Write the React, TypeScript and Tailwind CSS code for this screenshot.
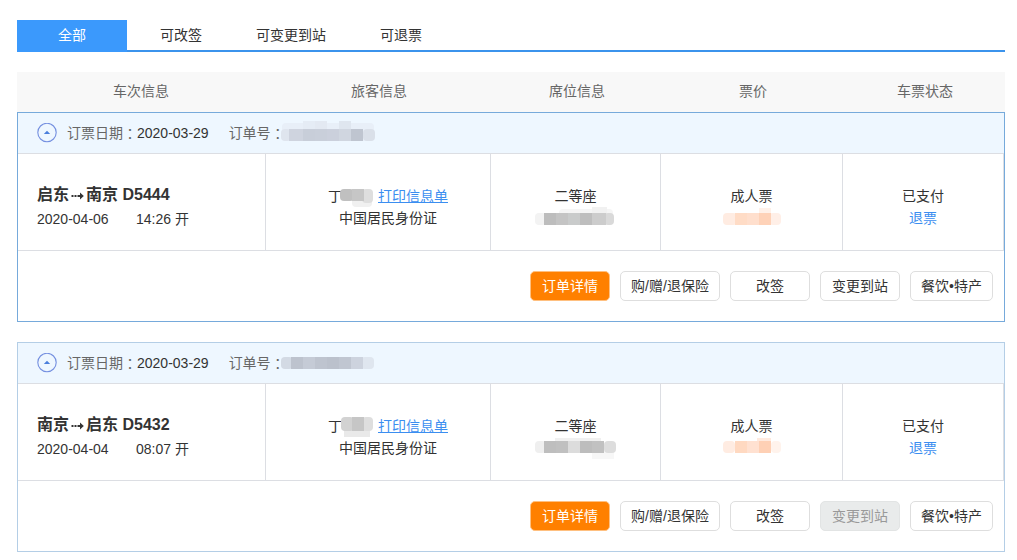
type Block = [x: number, y: number, w: number, h: number, color: string];

type Order = {
  from: string;
  to: string;
  train: string;
  date: string;
  time: string;
  active: boolean;
  changeDisabled: boolean;
  number: Block[];
  name: Block[];
  seat: Block[];
  price: Block[];
};

const orders: Order[] = [
  {
    from: "启东",
    to: "南京",
    train: "D5444",
    date: "2020-04-06",
    time: "14:26",
    active: true,
    changeDisabled: false,
    number: [
      [1, 2, 92, 18, "#e8eff8"],
      [22, 0, 12, 10, "#e5ecf5"],
      [34, 0, 12, 10, "#e3e9f2"],
      [58, 0, 12, 10, "#dfe6ef"],
      [0, 8, 10, 12, "#dfe5ee"],
      [8, 8, 14, 12, "#cfd4df"],
      [22, 8, 12, 12, "#c8ced9"],
      [34, 8, 12, 12, "#c9cfda"],
      [46, 8, 12, 12, "#cbd0dc"],
      [58, 8, 12, 12, "#d0d6e0"],
      [70, 8, 12, 12, "#bfc5d0"],
      [82, 8, 12, 12, "#dae0e9"],
    ],
    name: [
      [12, 13, 20, 9, "#f0f0f0"],
      [22, 4, 11, 14, "#dedede"],
      [0, 4, 14, 12, "#c0c0c0"],
      [12, 4, 12, 12, "#c6c6c6"],
    ],
    seat: [
      [24, 2, 54, 8, "#f5f5f5"],
      [57, 0, 15, 8, "#f1f1f1"],
      [0, 6, 11, 12, "#f3f3f3"],
      [69, 6, 10, 12, "#d9d9d9"],
      [9, 6, 12, 12, "#bdbdbd"],
      [21, 6, 12, 12, "#c4c4c4"],
      [33, 6, 12, 12, "#c9cbcb"],
      [45, 6, 12, 12, "#bebebe"],
      [57, 6, 14, 12, "#cccccc"],
    ],
    price: [
      [36, 1, 12, 8, "#fff1e9"],
      [0, 6, 14, 12, "#ffece2"],
      [46, 6, 12, 12, "#ffefe7"],
      [12, 6, 12, 12, "#ffdcc6"],
      [24, 6, 12, 12, "#ffdfcd"],
      [36, 6, 12, 12, "#fed2b8"],
    ],
  },
  {
    from: "南京",
    to: "启东",
    train: "D5432",
    date: "2020-04-04",
    time: "08:07",
    active: false,
    changeDisabled: true,
    number: [
      [0, 6, 12, 12, "#d3dae4"],
      [80, 6, 13, 12, "#dfe6ef"],
      [10, 6, 12, 12, "#bdc3ce"],
      [22, 6, 12, 12, "#c5cbd6"],
      [34, 6, 12, 12, "#bec4cf"],
      [46, 6, 12, 12, "#bbc1cc"],
      [58, 6, 12, 12, "#c0c6d1"],
      [70, 6, 12, 12, "#cdd3de"],
    ],
    name: [
      [4, 12, 26, 10, "#e9e9e9"],
      [1, 2, 13, 14, "#d2d2d2"],
      [22, 2, 11, 14, "#dedede"],
      [12, 2, 12, 14, "#c6c6c6"],
    ],
    seat: [
      [20, 1, 46, 6, "#f0f0f0"],
      [57, 14, 22, 8, "#f7f7f7"],
      [0, 4, 11, 12, "#efefef"],
      [9, 4, 12, 12, "#bebebe"],
      [21, 4, 12, 12, "#c0c0c0"],
      [33, 4, 12, 12, "#dcdcdc"],
      [45, 4, 12, 12, "#bdbdbd"],
      [57, 4, 12, 12, "#c1c1c1"],
      [69, 4, 12, 12, "#dddddd"],
    ],
    price: [
      [34, 1, 14, 8, "#ffeadf"],
      [0, 4, 12, 12, "#ffece2"],
      [48, 4, 10, 12, "#fff3ec"],
      [12, 4, 12, 12, "#ffd9c1"],
      [24, 4, 12, 12, "#ffe1d1"],
      [36, 4, 12, 12, "#fed0b5"],
    ],
  },
];

const tabs = ["可改签", "可变更到站", "可退票"];

function Mosaic({ blocks, className }: { blocks: Block[]; className: string }) {
  const lastX = Math.max(...blocks.map(([x, , w]) => x + w));
  return (
    <svg className={className} aria-hidden="true">
      {blocks.map(([x, y, w, h, color], i) => (
        <rect
          key={i}
          x={x}
          y={y}
          width={w}
          height={h}
          rx={x <= 1 || x + w >= lastX - 1 ? 4 : 0}
          fill={color}
        />
      ))}
    </svg>
  );
}

function CollapseIcon() {
  return (
    <svg className="size-5" viewBox="0 0 20 20" aria-hidden="true">
      <circle cx="10" cy="9.5" r="9.2" fill="none" stroke="#7590e0" strokeWidth="1.1" />
      <path d="M6.8 11 10 7.8l3.2 3.2z" fill="#4a7fdc" />
    </svg>
  );
}

function RouteArrow() {
  return (
    <svg className="h-4 w-[17px]" viewBox="0 0 17 16" aria-hidden="true">
      <path d="M2.5 9h2M5.5 9h2M8.5 9H13" stroke="#333" strokeWidth="1.8" />
      <path d="M11 5.6 14.8 9 11 12.4z" fill="#333" />
    </svg>
  );
}

function Colon() {
  return <span className="font-['Noto_Sans_CJK_TC',sans-serif]">：</span>;
}

const plainButton =
  "h-[30px] rounded-[5px] border border-[#dedede] bg-white text-center text-[#333]";

function OrderCard({ order }: { order: Order }) {
  return (
    <section className={order.active ? "border border-[#76aadb]" : "border border-[#b4cee6]"}>
      <header className="flex h-10 items-center bg-[#eef7ff] pl-[19px] text-[#666]">
        <button type="button" aria-label="收起" className="mr-[10px]">
          <CollapseIcon />
        </button>
        <p className="flex h-[22px] items-center leading-5">
          订票日期
          <Colon />
          <span className="text-[#333]">2020-03-29</span>
        </p>
        <p className="ml-5 flex h-[22px] items-center leading-5">
          订单号
          <Colon />
        </p>
        <Mosaic blocks={order.number} className="-ml-1 h-6 w-24" />
      </header>
      <table className="w-full table-fixed border-separate border-spacing-0">
        <colgroup>
          <col />
          <col className="w-[225px]" />
          <col className="w-[170px]" />
          <col className="w-[182px]" />
          <col className="w-[161px]" />
        </colgroup>
        <tbody>
          <tr className="h-[98px] text-center *:border-y *:border-r *:border-[#dcdee3] *:p-0 *:pt-[10px]">
            <td className="text-left">
              <div className="pl-[19px]">
                <p className="flex h-6 items-center text-base font-bold">
                  {order.from}
                  <RouteArrow />
                  {order.to} {order.train}
                </p>
                <p className="flex h-6 items-center">
                  <span className="w-[99px]">{order.date}</span>
                  {order.time} 开
                </p>
              </div>
            </td>
            <td>
              <div className="pl-5 leading-[22px]">
                <p className="flex h-[22px] items-center justify-center">
                  丁
                  <Mosaic blocks={order.name} className="-ml-0.5 mr-1 h-[22px] w-[34px]" />
                  <a href="#print" className="text-[#3b8ef0] underline">
                    打印信息单
                  </a>
                </p>
                <p>中国居民身份证</p>
              </div>
            </td>
            <td>
              <div className="leading-[22px]">
                <p>二等座</p>
                <Mosaic blocks={order.seat} className="mx-auto h-[22px] w-[82px]" />
              </div>
            </td>
            <td>
              <div className="leading-[22px]">
                <p>成人票</p>
                <Mosaic blocks={order.price} className="mx-auto h-[22px] w-[58px]" />
              </div>
            </td>
            <td>
              <div className="leading-[22px]">
                <p>已支付</p>
                <p>
                  <a href="#refund" className="text-[#3b8ef0]">
                    退票
                  </a>
                </p>
              </div>
            </td>
          </tr>
        </tbody>
      </table>
      <footer className="flex justify-end gap-[10px] pt-5 pr-[11px] pb-5">
        <button type="button" className="h-[30px] w-20 rounded-[5px] border border-[#ffc080] bg-[#ff8000] text-white">
          订单详情
        </button>
        <button type="button" className={`${plainButton} w-[100px]`}>购/赠/退保险</button>
        <button type="button" className={`${plainButton} w-20`}>改签</button>
        {order.changeDisabled ? (
          <button type="button" disabled className="h-[30px] w-20 rounded-[5px] border border-[#e2e4e4] bg-[#e9ebeb] text-[#999]">
            变更到站
          </button>
        ) : (
          <button type="button" className={`${plainButton} w-20`}>变更到站</button>
        )}
        <button type="button" className={`${plainButton} w-[83px]`}>餐饮•特产</button>
      </footer>
    </section>
  );
}

export default function App() {
  return (
    <main className="bg-white py-5 pr-3 pl-[17px] font-['Liberation_Sans','Noto_Sans_CJK_SC',sans-serif] text-sm text-[#333]">
      <nav className="flex h-8 border-b-2 border-[#3b93ec] leading-[30px]">
        <button type="button" className="h-8 w-[110px] bg-[#3b99fc] pb-0.5 text-white">
          全部
        </button>
        <div className="ml-[33px] flex gap-[54px]">
          {tabs.map((tab) => (
            <button type="button" key={tab}>
              {tab}
            </button>
          ))}
        </div>
      </nav>
      <table className="mt-5 w-full table-fixed bg-[#f8f8f8] text-[#666]">
        <colgroup>
          <col />
          <col className="w-[228px]" />
          <col className="w-[168px]" />
          <col className="w-[184px]" />
          <col className="w-[160px]" />
        </colgroup>
        <thead>
          <tr className="h-10 *:p-0 *:pb-0.5 *:font-normal">
            <th>车次信息</th>
            <th>旅客信息</th>
            <th>席位信息</th>
            <th>票价</th>
            <th>车票状态</th>
          </tr>
        </thead>
      </table>
      <div className="flex flex-col gap-5">
        {orders.map((order) => (
          <OrderCard key={order.train} order={order} />
        ))}
      </div>
    </main>
  );
}
